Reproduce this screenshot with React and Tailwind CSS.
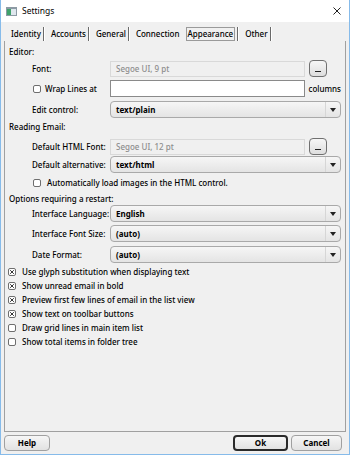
import React from 'react';

const font = { fontFamily: '"Noto Sans", "Segoe UI", sans-serif' };

function Box({ checked }) {
  return (
    <svg width="8" height="8" viewBox="0 0 8 8" className="shrink-0">
      <rect x="0.5" y="0.5" width="7" height="7" rx="1.5" fill="#fff" stroke="#6e6e6e" />
      {checked && <path d="M2.2 2.2 L5.8 5.8 M5.8 2.2 L2.2 5.8" stroke="#333" strokeWidth="1" />}
    </svg>
  );
}

function Check({ checked, label, className = '' }) {
  return (
    <div className={`flex items-center gap-[6px] h-[14px] ${className}`}>
      <Box checked={checked} />
      <span>{label}</span>
    </div>
  );
}

function Select({ value }) {
  return (
    <div className="flex-1 h-[17px] flex items-center rounded-[4px] border border-[#a9a9a9] bg-gradient-to-b from-[#f6f6f6] to-[#e4e4e4]">
      <span className="flex-1 pl-[5px] font-bold leading-none">{value}</span>
      <span className="w-[15px] h-full flex items-center justify-center border-l border-[#d6d6d6]">
        <svg width="6" height="4" viewBox="0 0 6 4">
          <path d="M0 0 H6 L3 4 Z" fill="#222" />
        </svg>
      </span>
    </div>
  );
}

function Disabled({ value }) {
  return (
    <div className="w-[195px] h-[16px] flex items-center border border-[#d9d9d9] bg-[#f0f0f0] pl-[5px] text-[#8d8d8d] leading-none">
      {value}
    </div>
  );
}

function Dots() {
  return (
    <div className="ml-[4px] w-[18px] h-[17px] rounded-[4px] border border-[#707070] bg-gradient-to-b from-[#f6f6f6] to-[#dedede] flex items-end justify-center pb-[4px]">
      <span className="block w-[6px] h-[1px] bg-[#222]" />
    </div>
  );
}

function Row({ label, children, className = '' }) {
  return (
    <div className={`flex items-center pl-[27px] pr-[4px] ${className}`}>
      <span className="w-[78px] shrink-0 whitespace-nowrap">{label}</span>
      {children}
    </div>
  );
}

const tabs = ['Identity', 'Accounts', 'General', 'Connection', 'Appearance', 'Other'];

export default function App() {
  return (
    <div
      style={font}
      className="w-[350px] h-[455px] flex flex-col bg-[#f0f0f0] text-[8px] font-medium text-black border border-t-0 border-[#86bbea] overflow-hidden"
    >
      <div className="h-[22px] bg-white flex items-center shrink-0 -mx-px text-[8.5px] font-normal">
        <svg width="11" height="9" viewBox="0 0 11 9" className="ml-[6px]">
          <rect x="0" y="0" width="11" height="9" fill="#8c9aa4" />
          <rect x="1" y="2" width="4" height="6" fill="#3fa26b" />
          <rect x="5" y="2" width="5" height="6" fill="#dfe7ee" />
        </svg>
        <span className="ml-[5px] flex-1">Settings</span>
        <svg width="8" height="8" viewBox="0 0 8 8" className="mr-[9px]">
          <path d="M0.5 0.5 L7.5 7.5 M7.5 0.5 L0.5 7.5" stroke="#222" strokeWidth="1" />
        </svg>
      </div>

      <div className="flex h-[14px] mt-[5px] pl-[4px] items-stretch shrink-0">
        {tabs.map((t) => (
          <div key={t} className="flex items-stretch">
            <span
              className={
                t === 'Appearance'
                  ? 'ml-[6px] px-[1px] border border-[#9a9a9a] leading-[12px] flex items-center'
                  : 'ml-[6px] leading-none flex items-center'
              }
            >
              {t}
            </span>
            {t !== 'Connection' && (
              <span className="ml-[2px] w-[2px] border-l border-[#6a6a6a] border-r border-r-white" />
            )}
          </div>
        ))}
      </div>

      <div className="flex-1 mx-[3px] border-l border-r border-b border-[#a0a0a0] flex flex-col">
        <div className="mt-[4px] h-[14px] pl-[4px] flex items-center">Editor:</div>
        <Row label="Font:" className="mt-[1px] h-[17px]">
          <Disabled value="Segoe UI, 9 pt" />
          <Dots />
        </Row>
        <div className="flex items-center pl-[28px] pr-[4px] mt-[3px] h-[17px]">
          <Box />
          <span className="ml-[4px] w-[66px] whitespace-nowrap">Wrap Lines at</span>
          <div className="w-[196px] h-[17px] border border-[#8a8a8a] bg-white" />
          <span className="ml-[4px]">columns</span>
        </div>
        <Row label="Edit control:" className="mt-[4px] h-[17px]">
          <Select value="text/plain" />
        </Row>
        <div className="mt-[2px] h-[14px] pl-[4px] flex items-center">Reading Email:</div>
        <Row label="Default HTML Font:" className="mt-[4px] h-[17px]">
          <Disabled value="Segoe UI, 12 pt" />
          <Dots />
        </Row>
        <Row label="Default alternative:" className="mt-[1px] h-[17px]">
          <Select value="text/html" />
        </Row>
        <Check className="mt-[3px] pl-[28px]" label="Automatically load images in the HTML control." />
        <div className="mt-[2px] h-[14px] pl-[4px] flex items-center">Options requiring a restart:</div>
        <Row label="Interface Language:" className="mt-[-1px] h-[17px]">
          <Select value="English" />
        </Row>
        <Row label="Interface Font Size:" className="mt-[3px] h-[17px]">
          <Select value="(auto)" />
        </Row>
        <Row label="Date Format:" className="mt-[4px] h-[17px]">
          <Select value="(auto)" />
        </Row>
        <div className="mt-[2px] pl-[3px] flex flex-col">
          <Check checked label="Use glyph substitution when displaying text" />
          <Check checked label="Show unread email in bold" />
          <Check checked label="Preview first few lines of email in the list view" />
          <Check checked label="Show text on toolbar buttons" />
          <Check label="Draw grid lines in main item list" />
          <Check label="Show total items in folder tree" />
        </div>
      </div>

      <div className="h-[22px] flex items-center px-[3px] shrink-0">
        <button className="w-[46px] h-[16px] rounded-[4px] border border-[#a0a0a0] bg-gradient-to-b from-[#f6f6f6] to-[#e2e2e2] font-bold leading-none">
          Help
        </button>
        <div className="flex-1" />
        <button className="w-[55px] h-[16px] rounded-[4px] border-2 border-[#2a2a2a] bg-gradient-to-b from-[#f6f6f6] to-[#e2e2e2] font-bold leading-none">
          Ok
        </button>
        <button className="ml-[3px] w-[51px] h-[16px] rounded-[4px] border border-[#a0a0a0] bg-gradient-to-b from-[#f6f6f6] to-[#e2e2e2] font-bold leading-none mr-[4px]">
          Cancel
        </button>
      </div>
    </div>
  );
}
